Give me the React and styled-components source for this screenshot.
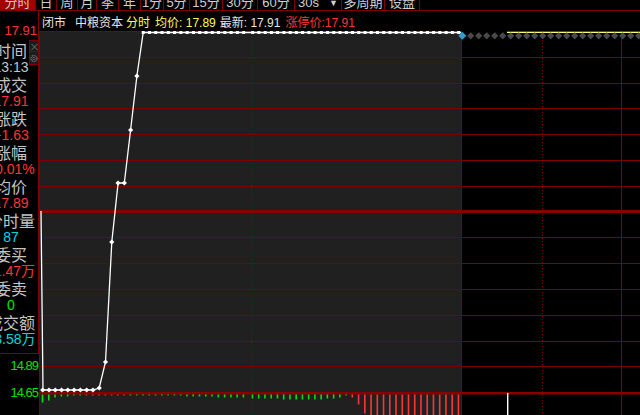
import React from "react";
import styled, { createGlobalStyle } from "styled-components";

const GRID = "#800000";
const RED = "#ff3434";
const GREEN = "#00e400";
const CYAN = "#00d8e0";
const LABEL = "#c4c4c4";

const GlobalStyle = createGlobalStyle`
    html, body {
        margin: 0;
        padding: 0;
        background: #000;
        overflow: hidden;
    }
    body {
        font-family: "Liberation Sans", "Noto Sans CJK SC", sans-serif;
    }
`;

const Screen = styled.div`
    width: 640px;
    height: 415px;
    overflow: hidden;
    background: #000;
    display: flex;
    flex-direction: column;
`;

const Toolbar = styled.div`
    display: flex;
    flex: none;
    height: 10px;
    border-bottom: 1px solid ${GRID};
    overflow: hidden;
`;

const Tab = styled.div`
    flex: none;
    box-sizing: border-box;
    width: ${(p) => p.$w}px;
    height: 14px;
    margin-top: -4px;
    border-right: 1px solid ${GRID};
    background: ${(p) => (p.$active ? "#a40000" : "transparent")};
    color: #cfcfcf;
    font-size: 13px;
    line-height: 14px;
    text-align: center;
    white-space: nowrap;
    display: flex;
    justify-content: center;
    gap: 10px;
`;

const Caret = styled.span`
    font-size: 9px;
    color: #cfcfcf;
`;

const Body = styled.div`
    flex: 1;
    min-height: 0;
    display: flex;
`;

const Side = styled.div`
    flex: none;
    width: 39px;
    display: flex;
    flex-direction: column;
`;

const SideTop = styled.div`
    border-right: 1px solid ${GRID};
    display: flex;
    flex-direction: column;
`;

const AxisPrice = styled.div`
    color: ${(p) => p.$color};
    font-size: 13px;
    line-height: 15px;
    text-align: right;
    padding-right: 1px;
    margin-top: ${(p) => p.$mt}px;
    letter-spacing: ${(p) => p.$ls || 0}px;
`;

const InfoBox = styled.div`
    position: relative;
    padding: 4px 0 5px;
    border-bottom: 1px solid ${GRID};
`;

const InfoList = styled.div`
    width: 54px;
    margin-left: -16px;
    display: flex;
    flex-direction: column;
    text-align: center;
    white-space: nowrap;
`;

const InfoLabel = styled.div`
    height: 17px;
    line-height: 17px;
    font-size: 16px;
    color: ${LABEL};
    font-family: "Noto Sans CJK SC", sans-serif;
`;

const InfoValue = styled.div`
    height: 17px;
    line-height: 17px;
    font-size: 14px;
    color: ${(p) => p.$color};
`;

const IconBox = styled.div`
    position: absolute;
    left: 29px;
    top: ${(p) => p.$top}px;
    width: 8px;
    height: ${(p) => p.$h}px;
    border: 1px solid ${GRID};
    border-right: none;
    background: #1c1c1c;
    display: flex;
    align-items: center;
    justify-content: center;
`;

const Main = styled.div`
    flex: 1;
    min-width: 0;
    display: flex;
    flex-direction: column;
`;

const InfoBar = styled.div`
    flex: none;
    height: 20px;
    display: flex;
    align-items: center;
    padding-left: 3px;
    font-size: 12px;
    white-space: nowrap;
`;

const InfoText = styled.span`
    color: ${(p) => p.$color};
    margin-left: ${(p) => p.$ml || 0}px;
`;

const ChartSvg = styled.svg`
    display: block;
    flex: none;
`;

const tabs = [
    { t: "分时", w: 36, active: true },
    { t: "日", w: 21 },
    { t: "周", w: 21 },
    { t: "月", w: 19 },
    { t: "季", w: 22 },
    { t: "年", w: 22 },
    { t: "1分", w: 23 },
    { t: "5分", w: 26 },
    { t: "15分", w: 33 },
    { t: "30分", w: 35 },
    { t: "60分", w: 37 },
    { t: "30s", w: 47, drop: true },
    { t: "多周期", w: 43 },
    { t: "设盘", w: 35 },
];

const info = [
    ["时间", "13:13", LABEL],
    ["成交", "17.91", RED],
    ["涨跌", "+1.63", RED],
    ["涨幅", "10.01%", RED],
    ["均价", "17.89", RED],
    ["分时量", "87", CYAN],
    ["委买", "11.47万", RED],
    ["委卖", "0", GREEN],
    ["成交额", "13.58万", CYAN],
];

// chart geometry, relative to the svg origin (page 39,31)
const W = 601;
const H = 384;
const pointX = (i) => (i <= 32 ? 3.7 + 6.28 * i : 213.7 + 6.24 * (i - 33));
const priceY = [359, 359, 359, 359, 359, 359, 359, 359, 359, 357, 331, 211, 152, 152, 99, 45];
const points = Array.from({ length: 67 }, (_, i) => ({
    x: pointX(i),
    y: i < priceY.length ? priceY[i] : 1.5,
}));

const bar = (i) => {
    if (i === 0) return ["g", 8];
    if (i === 1) return ["g", 6];
    if (i === 2) return ["g", 3];
    if (i <= 4) return ["g", 2];
    if (i <= 6) return ["g", 1];
    if (i <= 13) return ["r", 1];
    if (i <= 22) return ["g", 1];
    if (i <= 27) return ["g", 2];
    if (i <= 32) return ["g", 3];
    if (i <= 37) return ["g", 4];
    if (i <= 44) return ["g", 5];
    if (i <= 46) return ["g", 4];
    if (i === 47) return ["g", 3];
    if (i === 48) return ["g", 1];
    if (i === 49) return ["r", 3];
    if (i === 50) return ["r", 10];
    if (i === 51) return ["r", 19];
    return ["r", 25];
};

function Chart() {
    const gridY = Array.from({ length: 15 }, (_, k) => k * 25.8);
    const path =
        "M2 180 L4 359 " + points.map((p) => `L${p.x.toFixed(1)} ${p.y}`).join(" ") + " L422 1.5";
    const diamonds = Array.from({ length: 22 }, (_, k) => 431.7 + 8 * k);

    return (
        <ChartSvg width={W} height={H} viewBox={`0 0 ${W} ${H}`}>
            <rect x="1" y="0" width="421.5" height={H} fill="#202020" />
            {gridY.map((y, k) => {
                if (k === 0) return <rect key={k} x="0" y="0" width="423" height="1" fill={GRID} />;
                if (k === 7) return <rect key={k} x="0" y="179" width={W} height="3" fill="#8a0000" />;
                if (k === 14) return <rect key={k} x="0" y="361" width={W} height="2.5" fill="#8a0000" />;
                return <rect key={k} x="0" y={Math.round(y)} width={W} height="1" fill={GRID} />;
            })}
            <rect x="0" y="0" width="1" height={H} fill={GRID} />
            <rect x="422" y="0" width="1" height={H} fill={GRID} />
            <rect x="582" y="0" width="1" height={H} fill={GRID} />
            <line x1="503.5" y1="0" x2="503.5" y2={H} stroke={GRID} strokeWidth="1" strokeDasharray="1 2" />
            <line x1="212.5" y1="0" x2="212.5" y2={H} stroke={GRID} strokeWidth="1" strokeDasharray="1 2" />

            {points.map((p, i) => {
                const [c, h] = bar(i);
                return (
                    <rect
                        key={i}
                        x={p.x - 1}
                        y="363.5"
                        width="1.6"
                        height={h}
                        fill={c === "g" ? GREEN : RED}
                    />
                );
            })}
            <rect x="468" y="362" width="1.4" height="22" fill="#fff" />

            <path d={path} fill="none" stroke="#fff" strokeWidth="1.3" />
            {points.map((p, i) =>
                i < 16 ? (
                    <polygon
                        key={i}
                        points={`${p.x},${p.y - 2.6} ${p.x + 2.6},${p.y} ${p.x},${p.y + 2.6} ${p.x - 2.6},${p.y}`}
                        fill="#fff"
                    />
                ) : (
                    <rect key={i} x={p.x - 1.5} y="0" width="3" height="3" fill="#fff" />
                )
            )}

            <rect x="468" y="0.7" width="133" height="1.3" fill="#ffff70" />
            {diamonds.map((x, k) => (
                <polygon
                    key={k}
                    points={`${x},1.2 ${x + 3.6},4.8 ${x},8.4 ${x - 3.6},4.8`}
                    fill="#4a4a4a"
                />
            ))}
            <polygon points="423.3,0.8 427.3,4.8 423.3,8.8 419.3,4.8" fill="#2aa0d4" />
        </ChartSvg>
    );
}

function GearIcon() {
    return (
        <svg width="8" height="9" viewBox="0 0 8 9">
            <circle cx="4" cy="4.5" r="3" fill="none" stroke="#6a6a6a" strokeWidth="1.4" strokeDasharray="1.2 0.7" />
            <circle cx="4" cy="4.5" r="1.2" fill="none" stroke="#6a6a6a" strokeWidth="0.8" />
        </svg>
    );
}

function CloseIcon() {
    return (
        <svg width="7" height="8" viewBox="0 0 7 8">
            <path d="M0.5 1 L6.5 7 M6.5 1 L0.5 7" stroke="#707070" strokeWidth="1" />
        </svg>
    );
}

export default function App() {
    return (
        <Screen>
            <GlobalStyle />
            <Toolbar>
                {tabs.map((tab) => (
                    <Tab key={tab.t} $w={tab.w} $active={tab.active}>
                        <span>{tab.t}</span>
                        {tab.drop && <Caret>▼</Caret>}
                    </Tab>
                ))}
            </Toolbar>
            <Body>
                <Side>
                    <SideTop>
                        <AxisPrice $color={RED} $mt={12}>
                            17.91
                        </AxisPrice>
                        <InfoBox>
                            <InfoList>
                                {info.map(([label, value, color]) => (
                                    <React.Fragment key={label}>
                                        <InfoLabel>{label}</InfoLabel>
                                        <InfoValue $color={color}>{value}</InfoValue>
                                    </React.Fragment>
                                ))}
                            </InfoList>
                            <IconBox $top={2} $h={11}>
                                <CloseIcon />
                            </IconBox>
                            <IconBox $top={13} $h={12}>
                                <GearIcon />
                            </IconBox>
                        </InfoBox>
                    </SideTop>
                    <AxisPrice $color={GREEN} $mt={4} $ls={-1}>
                        14.89
                    </AxisPrice>
                    <AxisPrice $color={GREEN} $mt={12} $ls={-1}>
                        14.65
                    </AxisPrice>
                </Side>
                <Main>
                    <InfoBar>
                        <InfoText $color="#e6e6e6">闭市</InfoText>
                        <InfoText $color="#e6e6e6" $ml={9}>
                            中粮资本
                        </InfoText>
                        <InfoText $color="#ffff50" $ml={3}>
                            分时
                        </InfoText>
                        <InfoText $color="#ffff50" $ml={5}>
                            均价: 17.89
                        </InfoText>
                        <InfoText $color="#e6e6e6" $ml={4}>
                            最新: 17.91
                        </InfoText>
                        <InfoText $color={RED} $ml={5}>
                            涨停价:17.91
                        </InfoText>
                    </InfoBar>
                    <Chart />
                </Main>
            </Body>
        </Screen>
    );
}
